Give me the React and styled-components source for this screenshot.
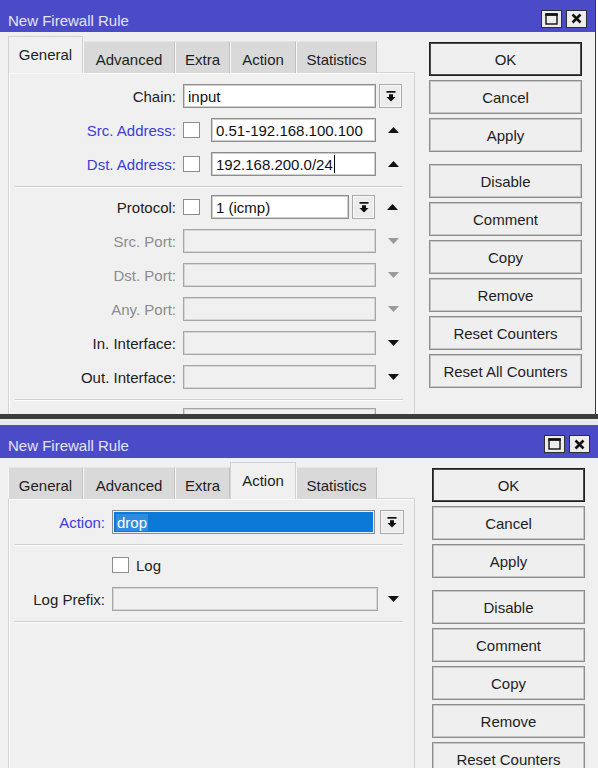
import React from 'react'
import styled, { createGlobalStyle } from 'styled-components'

const GlobalStyle = createGlobalStyle`
  html, body { margin: 0; padding: 0; background: #fff; }
  body {
    font-family: 'Liberation Sans', Arial, sans-serif;
    font-size: 15px;
    color: #1e1e1e;
  }
  * { box-sizing: border-box; }
`

const Page = styled.div`
  width: 598px;
  height: 768px;
  overflow: hidden;
  display: flex;
  flex-direction: column;
`

const Window = styled.div`
  width: ${p => p.$width}px;
  height: ${p => (p.$height ? `${p.$height}px` : 'auto')};
  flex: ${p => (p.$height ? 'none' : '1')};
  background: #f0f0f0;
  border-right: ${p => (p.$edge ? '1px solid #3a3a3a' : 'none')};
  overflow: hidden;
  display: flex;
  flex-direction: column;
`

const Divider = styled.div`
  flex: none;
  height: 11px;
  border-top: 5px solid #3c3c3c;
  background: #e9e9e9;
`

const TitleBar = styled.div`
  flex: none;
  height: ${p => p.$h}px;
  background: #4b4bc8;
  color: #e4e4f6;
  display: flex;
  align-items: center;
  padding: 5px 8px 0 8px;
`

const Title = styled.span`
  line-height: 18px;
  margin-top: 4px;
`

const WinButtons = styled.div`
  margin-left: auto;
  display: flex;
  gap: 4px;
`

const WinButton = styled.div`
  width: 21px;
  height: 18px;
  background: #ececec;
  border: 1px solid #2e2e2e;
  display: flex;
  align-items: center;
  justify-content: center;
`

const Body = styled.div`
  flex: 1;
  min-height: 0;
  display: flex;
  padding: 4px 0 0 8px;
`

const LeftCol = styled.div`
  width: 407px;
  display: flex;
  flex-direction: column;
`

const Tabs = styled.div`
  flex: none;
  height: 37px;
  display: flex;
  align-items: flex-end;
  margin-bottom: -1px;
  position: relative;
  z-index: 1;
`

const Tab = styled.div`
  width: ${p => p.$w}px;
  height: ${p => (p.$active ? 37 : 32)}px;
  padding-top: 9px;
  line-height: 18px;
  text-align: center;
  color: #1e1e1e;
  background: ${p => (p.$active ? '#f0f0f0' : '#d9d9d9')};
  border-top: 1px solid ${p => (p.$active ? '#d2d2d2' : '#e4e4e4')};
  border-left: 1px solid ${p => (p.$active ? '#d2d2d2' : '#f6f6f6')};
  border-right: 1px solid ${p => (p.$active ? '#d2d2d2' : '#c2c2c2')};
`

const Panel = styled.div`
  flex: 1;
  background: #f0f0f0;
  border: 1px solid #d4d4d4;
  border-bottom: none;
  box-shadow: inset 1px 1px 0 #fbfbfb;
  padding-top: 11px;
`

const Row = styled.div`
  height: 24px;
  margin-bottom: 10px;
  display: flex;
  align-items: center;
`

const toneColor = { dark: '#202020', blue: '#3c3cdc', grey: '#8c8c8c' }

const Label = styled.div`
  width: ${p => p.$w}px;
  margin-right: 7px;
  text-align: right;
  white-space: nowrap;
  color: ${p => toneColor[p.$tone || 'dark']};
`

const Field = styled.div`
  width: ${p => p.$w}px;
  height: 24px;
  padding-left: 4px;
  display: flex;
  align-items: center;
  white-space: nowrap;
  overflow: hidden;
  color: ${p => (p.$selected ? '#fff' : '#111')};
  background: ${p => (p.$selected ? '#0a79d8' : p.$grey ? '#f0f0f0' : '#fff')};
  border: 1px solid ${p => (p.$grey ? '#a6a6a6' : '#8d8d8d')};
  box-shadow: inset 0 0 0 1px ${p => (p.$selected ? '#e6eef8' : p.$grey ? '#d6d6d6' : '#cfcfcf')};
`

const Highlight = styled.span`
  background: #2f8ce2;
  padding: 0 1px;
  margin-left: -1px;
`

const Caret = styled.span`
  display: inline-block;
  width: 1px;
  height: 18px;
  background: #000;
  margin-left: 1px;
`

const Check = styled.div`
  width: 17px;
  height: 16px;
  margin-right: ${p => p.$gap}px;
  background: #fff;
  border: 1px solid #8d8d8d;
  flex: none;
`

const ComboBtn = styled.div`
  width: ${p => p.$w || 23}px;
  height: 24px;
  margin-left: ${p => p.$gap || 3}px;
  background: #ececec;
  border: 1px solid #a9a9a9;
  box-shadow: inset 0 0 0 1px #f8f8f8;
  display: flex;
  align-items: center;
  justify-content: center;
`

const Slot = styled.div`
  width: ${p => p.$w || 34}px;
  display: flex;
  justify-content: center;
`

const Separator = styled.div`
  height: 2px;
  margin: 2px 11px 7px 6px;
  border-top: 1px solid #cdcdcd;
  border-bottom: 1px solid #fdfdfd;
`

const CheckText = styled.span`
  margin-left: 1px;
`

const ButtonCol = styled.div`
  width: 153px;
  margin-left: ${p => p.$offset}px;
  padding-top: 6px;
  display: flex;
  flex-direction: column;
`

const Button = styled.div`
  flex: none;
  height: 34px;
  margin-bottom: 4px;
  margin-top: ${p => (p.$spaced ? 8 : 0)}px;
  display: flex;
  align-items: center;
  justify-content: center;
  color: #1e1e1e;
  background: #efefef;
  border: 1px solid ${p => (p.$default ? '#1f1f1f' : '#8d8d8d')};
  box-shadow: inset 0 0 0 1px ${p => (p.$default ? '#4a4a4a' : '#c6c6c6')};
`

const Tri = ({ up, color = '#111' }) => (
  <svg width="11" height="6" viewBox="0 0 11 6">
    <path d={up ? 'M0 6 L5.5 0 L11 6 Z' : 'M0 0 L11 0 L5.5 6 Z'} fill={color} />
  </svg>
)

const ComboIcon = () => (
  <svg width="10" height="11" viewBox="0 0 10 11">
    <rect x="0.5" y="0" width="9" height="1.7" fill="#111" />
    <path d="M3 3.2 H7 V6 H9.5 L5 10.6 L0.5 6 H3 Z" fill="#111" />
  </svg>
)

const MaxIcon = () => (
  <svg width="13" height="12" viewBox="0 0 13 12">
    <rect x="1" y="1" width="11" height="10" fill="none" stroke="#111" strokeWidth="1.4" />
    <rect x="0.3" y="0.3" width="12.4" height="2.6" fill="#111" />
  </svg>
)

const CloseIcon = () => (
  <svg width="11" height="11" viewBox="0 0 11 11">
    <path d="M1.5 1.5 L9.5 9.5 M9.5 1.5 L1.5 9.5" stroke="#111" strokeWidth="2.5" />
  </svg>
)

const tabs = [
  { name: 'General', w: 75 },
  { name: 'Advanced', w: 92 },
  { name: 'Extra', w: 55 },
  { name: 'Action', w: 66 },
  { name: 'Statistics', w: 81 },
]

const buttons = ['OK', 'Cancel', 'Apply', 'Disable', 'Comment', 'Copy', 'Remove', 'Reset Counters', 'Reset All Counters']

const RuleWindow = ({ active, height, width, edge, titleH, btnOffset, children }) => (
  <Window $height={height} $width={width} $edge={edge}>
    <TitleBar $h={titleH}>
      <Title>New Firewall Rule</Title>
      <WinButtons>
        <WinButton><MaxIcon /></WinButton>
        <WinButton><CloseIcon /></WinButton>
      </WinButtons>
    </TitleBar>
    <Body>
      <LeftCol>
        <Tabs>
          {tabs.map(t => (
            <Tab key={t.name} $w={t.w} $active={t.name === active}>{t.name}</Tab>
          ))}
        </Tabs>
        <Panel>{children}</Panel>
      </LeftCol>
      <ButtonCol $offset={btnOffset}>
        {buttons.map((b, i) => (
          <Button key={b} $default={i === 0} $spaced={b === 'Disable'}>{b}</Button>
        ))}
      </ButtonCol>
    </Body>
  </Window>
)

const LW = 167

const PortRow = ({ label }) => (
  <Row>
    <Label $w={LW} $tone="grey">{label}</Label>
    <Field $w={193} $grey />
    <Slot><Tri color="#9a9a9a" /></Slot>
  </Row>
)

const IfaceRow = ({ label }) => (
  <Row>
    <Label $w={LW}>{label}</Label>
    <Field $w={193} $grey />
    <Slot><Tri /></Slot>
  </Row>
)

const GeneralTab = () => (
  <>
    <Row>
      <Label $w={LW}>Chain:</Label>
      <Field $w={193}>input</Field>
      <ComboBtn><ComboIcon /></ComboBtn>
    </Row>
    <Row>
      <Label $w={LW} $tone="blue">Src. Address:</Label>
      <Check $gap={11} />
      <Field $w={165}>0.51-192.168.100.100</Field>
      <Slot><Tri up /></Slot>
    </Row>
    <Row>
      <Label $w={LW} $tone="blue">Dst. Address:</Label>
      <Check $gap={11} />
      <Field $w={165}>192.168.200.0/24<Caret /></Field>
      <Slot><Tri up /></Slot>
    </Row>
    <Separator />
    <Row>
      <Label $w={LW}>Protocol:</Label>
      <Check $gap={11} />
      <Field $w={138}>1 (icmp)</Field>
      <ComboBtn><ComboIcon /></ComboBtn>
      <Slot><Tri up /></Slot>
    </Row>
    <PortRow label="Src. Port:" />
    <PortRow label="Dst. Port:" />
    <PortRow label="Any. Port:" />
    <IfaceRow label="In. Interface:" />
    <IfaceRow label="Out. Interface:" />
    <Separator />
    <Row>
      <Label $w={LW} />
      <Field $w={193} $grey />
    </Row>
  </>
)

const AW = 96

const ActionTab = () => (
  <>
    <Row>
      <Label $w={AW} $tone="blue">Action:</Label>
      <Field $w={263} $selected><Highlight>drop</Highlight></Field>
      <ComboBtn $w={24} $gap={5}><ComboIcon /></ComboBtn>
    </Row>
    <Separator />
    <Row>
      <Label $w={AW} />
      <Check $gap={6} />
      <CheckText>Log</CheckText>
    </Row>
    <Row>
      <Label $w={AW}>Log Prefix:</Label>
      <Field $w={266} $grey />
      <Slot $w={30}><Tri /></Slot>
    </Row>
    <Separator />
  </>
)

export default function App() {
  return (
    <>
      <GlobalStyle />
      <Page>
        <RuleWindow active="General" height={414} width={596} edge titleH={32} btnOffset={14}>
          <GeneralTab />
        </RuleWindow>
        <Divider />
        <RuleWindow active="Action" width={598} titleH={33} btnOffset={17}>
          <ActionTab />
        </RuleWindow>
      </Page>
    </>
  )
}
